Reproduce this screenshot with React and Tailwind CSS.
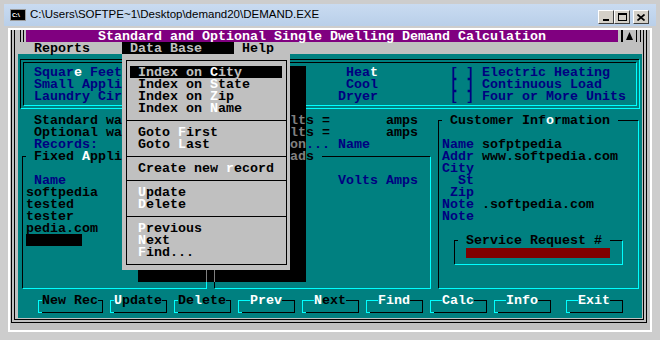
import React from 'react';

const CY = 'border-[#00ffff]';
const BK = 'border-black';

const Cell = ({ children }) => <div className="w-[8px] h-[12px] shrink-0">{children}</div>;
const TL = ({ c }) => <Cell><div className={`ml-[4px] mt-[6px] w-[4px] h-[6px] border-l border-t ${c}`} /></Cell>;
const TR = ({ c }) => <Cell><div className={`mt-[6px] w-[5px] h-[6px] border-r border-t ${c}`} /></Cell>;
const BL = ({ c }) => <Cell><div className={`ml-[4px] w-[4px] h-[7px] border-l border-b ${c}`} /></Cell>;
const BR = ({ c }) => <Cell><div className={`w-[5px] h-[7px] border-r border-b ${c}`} /></Cell>;
const HL = ({ c }) => <Cell><div className={`mt-[6px] w-[8px] border-t ${c}`} /></Cell>;

const R = ({ children, className = '' }) => <div className={`h-[12px] pt-[1px] whitespace-pre ${className}`}>{children}</div>;
const B = ({ children, className = '' }) => <span className={`text-[#000080] ${className}`}>{children}</span>;
const W = ({ children }) => <span className="text-white">{children}</span>;
const T = ({ children, className = '' }) => <span className={`bg-[#008080] ${className}`}>{children}</span>;

// single line frame drawn through the middle of the character cells
function Box({ className = '', children }) {
  return (
    <div className={`flex flex-col shrink-0 ${className}`}>
      <div className="flex-1 mt-[6px] ml-[4px] mr-[3px] mb-[5px] border border-t-black border-l-black border-r-[#00ffff] border-b-[#00ffff]">
        <div className="-mt-[7px] -ml-[5px]">{children}</div>
      </div>
    </div>
  );
}

function Btn({ dash, children }) {
  return (
    <div className="flex flex-col shrink-0">
      <div className="flex h-[12px]">
        <TL c={CY} />
        {dash && <HL c={CY} />}
        <span className="whitespace-pre pt-[1px]">{children}</span>
        {dash && <HL c={BK} />}
        <TR c={BK} />
      </div>
      <div className="flex h-[12px]">
        <BL c={CY} />
        <div className="flex-1 mt-[6px] border-t border-black" />
        <BR c={BK} />
      </div>
    </div>
  );
}

function TitleBar() {
  return (
    <div className="h-[30px] px-[4px] pt-[4px]">
      <div className="h-[22px] flex items-center bg-linear-to-b from-[#c9dbf1] to-[#b9cfe9] pl-[6px] pr-[7px]">
        <div className="w-[16px] h-[12px] bg-black border border-[#9a9a9a] text-white text-[6px] leading-[6px] font-bold pl-[1px] pt-[2px]">C:\</div>
        <span className="ml-[4px] text-[11.5px] text-black font-['Liberation_Sans',sans-serif]">{'C:\\Users\\SOFTPE~1\\Desktop\\demand20\\DEMAND.EXE'}</span>
        <div className="ml-auto flex mt-[4px]">
          <div className="w-[16px] h-[14px] bg-[#d4d0c8] border border-t-white border-l-white border-r-[#404040] border-b-[#404040] flex items-end justify-center pb-[2px]">
            <div className="w-[6px] h-[2px] bg-black" />
          </div>
          <div className="w-[16px] h-[14px] bg-[#d4d0c8] border border-t-white border-l-white border-r-[#404040] border-b-[#404040] flex items-center justify-center">
            <div className="w-[9px] h-[8px] border border-black border-t-2" />
          </div>
          <div className="ml-[3px] w-[16px] h-[14px] bg-[#d4d0c8] border border-t-white border-l-white border-r-[#404040] border-b-[#404040] flex items-center justify-center">
            <svg width="8" height="7" viewBox="0 0 8 7">
              <path d="M0.5 0.5L7.5 6.5M7.5 0.5L0.5 6.5" stroke="black" strokeWidth="1.7" />
            </svg>
          </div>
        </div>
      </div>
    </div>
  );
}

function Menu() {
  const item = 'h-[12px] pt-[1px] whitespace-pre pl-[16px]';
  const sep = (
    <div className="h-[12px] pt-[6px] px-[4px]">
      <div className="border-t border-black" />
    </div>
  );
  return (
    <div className="absolute left-[112px] top-[24px] w-[168px] h-[216px] bg-[#c0c0c0] flex flex-col">
      <div className="flex-1 mt-[6px] ml-[4px] mr-[3px] mb-[5px] border border-black">
        <div className="-mt-[7px] -ml-[5px] w-[168px] pt-[12px]">
          <div className="h-[12px] pl-[8px]">
            <div className="w-[152px] h-[12px] pt-[1px] bg-black text-[#c0c0c0] whitespace-pre pl-[8px]">Index on <W>C</W>ity</div>
          </div>
          <div className={item}>Index on <W>S</W>tate</div>
          <div className={item}>Index on <W>Z</W>ip</div>
          <div className={item}>Index on <W>N</W>ame</div>
          {sep}
          <div className={item}>Goto <W>F</W>irst</div>
          <div className={item}>Goto <W>L</W>ast</div>
          {sep}
          <div className={item}>Create new <W>r</W>ecord</div>
          {sep}
          <div className={item}><W>U</W>pdate</div>
          <div className={item}><W>D</W>elete</div>
          {sep}
          <div className={item}><W>P</W>revious</div>
          <div className={item}><W>N</W>ext</div>
          <div className={item}><W>F</W>ind...</div>
        </div>
      </div>
    </div>
  );
}

function Console() {
  return (
    <div className="relative w-[640px] h-[300px] outline-2 outline-white bg-[#c0c0c0] font-['Liberation_Mono',monospace] font-bold text-[13.333px] leading-[12px] text-black">
      <div className="ml-[1px] mr-[3px] pl-[3px] pr-[1px] pb-[1px] border-x-4 border-b-4 border-double border-black">
        {/* row 0: title */}
        <div className="flex h-[12px]">
          <div className="w-[8px] pl-[2px]"><div className="w-[4px] h-full border-x border-black" /></div>
          <div className="w-[592px] h-[12px] pt-[1px] bg-[#800080] text-white whitespace-pre pl-[72px]">Standard and Optional Single Dwelling Demand Calculation</div>
          <div className="w-[8px] pl-[3px]"><div className="w-[2px] h-full bg-black" /></div>
          <div className="w-[8px]">
            <svg width="8" height="12" viewBox="0 0 8 12"><polygon points="0,10 3.5,2 7,10" fill="black" /></svg>
          </div>
          <div className="w-[8px] pl-[2px]"><div className="w-[5px] h-full border-x border-black" /></div>
        </div>

        {/* row 1: menu bar */}
        <div className="flex h-[12px] whitespace-pre pl-[16px]">
          <span className="pt-[1px]">Reports</span>
          <div className="ml-[32px] h-[12px] pt-[1px] bg-black text-[#c0c0c0] w-[112px] pl-[8px]">Data Base</div>
          <span className="ml-[8px] pt-[1px]">Help</span>
        </div>

        {/* rows 2-6 */}
        <div className="flex flex-col h-[60px] bg-[#008080]">
          <div className="flex-1 mt-[5px] ml-[2px] mr-[2px] mb-[5px] border-4 border-double border-t-black border-l-black border-r-[#00ffff] border-b-[#00ffff]">
            <div className="-mt-[9px] -ml-[6px] pt-[12px]">
              <R className="pl-[16px]">
                <B>Squar</B><W>e</W><B> Feet</B>
                <B className="ml-[224px]">Hea</B><W>t</W>
                <B className="ml-[72px]">[ ] Electric Heating</B>
              </R>
              <R className="pl-[16px]">
                <B>Small Appli</B>
                <B className="ml-[224px]">Cool</B>
                <B className="ml-[72px]">[ ] Continuous Load</B>
              </R>
              <R className="pl-[16px]">
                <B>Laundry Cir</B>
                <B className="ml-[216px]">Dryer</B>
                <B className="ml-[72px]">[ ] Four or More Units</B>
              </R>
            </div>
          </div>
        </div>

        {/* rows 7-21 */}
        <div className="flex h-[180px] bg-[#008080]">
          <div className="flex flex-col w-[416px]">
            <R className="pl-[16px]">
              <span>Standard wa</span><span className="ml-[184px]">s =</span><span className="ml-[56px]">amps</span>
            </R>
            <R className="pl-[16px]">
              <span>Optional wa</span><span className="ml-[184px]">s =</span><span className="ml-[56px]">amps</span>
            </R>
            <R className="pl-[16px]">
              <B>Records:</B><B className="ml-[208px]">...</B><B className="ml-[8px]">Name</B>
            </R>
            <div className="flex">
              <Box className="w-[192px] h-[144px]">
                <R className="pl-[8px]"><T>{' Fixed '}<W>A</W>ppli</T></R>
                <R />
                <R className="pl-[16px]"><B>Name</B></R>
                <R className="pl-[8px]">softpedia</R>
                <R className="pl-[8px]">tested</R>
                <R className="pl-[8px]">tester</R>
                <R className="pl-[8px]">pedia.com</R>
                <div className="h-[12px] pl-[8px]"><div className="w-[56px] h-[12px] bg-black" /></div>
              </Box>
              <Box className="w-[224px] h-[144px]">
                <R className="pl-[96px]"><T>{'s '}</T></R>
                <R />
                <R className="pl-[128px]"><B>Volts Amps</B></R>
              </Box>
            </div>
          </div>
          <Box className="w-[208px] h-[180px]">
            <R className="pl-[8px]"><T>{' Customer Inf'}<W>o</W>{'rmation '}</T></R>
            <R />
            <R className="pl-[8px]"><B>Name</B> sofptpedia</R>
            <R className="pl-[8px]"><B>Addr</B> www.softpedia.com</R>
            <R className="pl-[8px]"><B>City</B></R>
            <R className="pl-[24px]"><B>St</B></R>
            <R className="pl-[16px]"><B>Zip</B></R>
            <R className="pl-[8px]"><B>Note</B> .softpedia.com</R>
            <R className="pl-[8px]"><B>Note</B></R>
            <R />
            <div className="flex pl-[16px]">
              <Box className="w-[176px] h-[36px]">
                <R className="pl-[8px]"><T>{' Service Request # '}</T></R>
                <div className="h-[12px] pl-[16px]"><div className="w-[144px] h-[12px] bg-[#800000]" /></div>
              </Box>
            </div>
          </Box>
        </div>

        {/* rows 22-23: buttons */}
        <div className="flex h-[24px] bg-[#008080] pl-[16px]">
          <Btn>New Rec</Btn>
          <Btn><W>U</W>pdate</Btn>
          <Btn>De<W>l</W>ete</Btn>
          <Btn dash><W>Prev</W></Btn>
          <Btn dash><W>N</W>ext</Btn>
          <Btn dash><W>Find</W></Btn>
          <Btn dash><W>Calc</W></Btn>
          <Btn dash><W>Info</W></Btn>
          <div className="w-[8px]" />
          <Btn dash><W>Exit</W></Btn>
        </div>
      </div>

      {/* shadow of the pull-down menu, showing the dimmed text beneath */}
      <div className="absolute left-[280px] top-[36px] w-[16px] h-[204px] bg-black text-[#808080] pt-[48px]">
        <R>lt</R>
        <R>lt</R>
        <R>on</R>
        <R>ad</R>
      </div>
      <div className="absolute left-[128px] top-[240px] w-[168px] h-[12px] bg-black flex">
        <div className="ml-[68px] w-px h-full bg-[#808080]" />
        <div className="ml-[7px] w-px h-full bg-[#808080]" />
      </div>
      <Menu />
    </div>
  );
}

export default function App() {
  return (
    <div className="w-[660px] h-[340px] bg-[#cdcdcd] overflow-hidden">
      <TitleBar />
      <div className="pl-[10px]">
        <Console />
      </div>
    </div>
  );
}
